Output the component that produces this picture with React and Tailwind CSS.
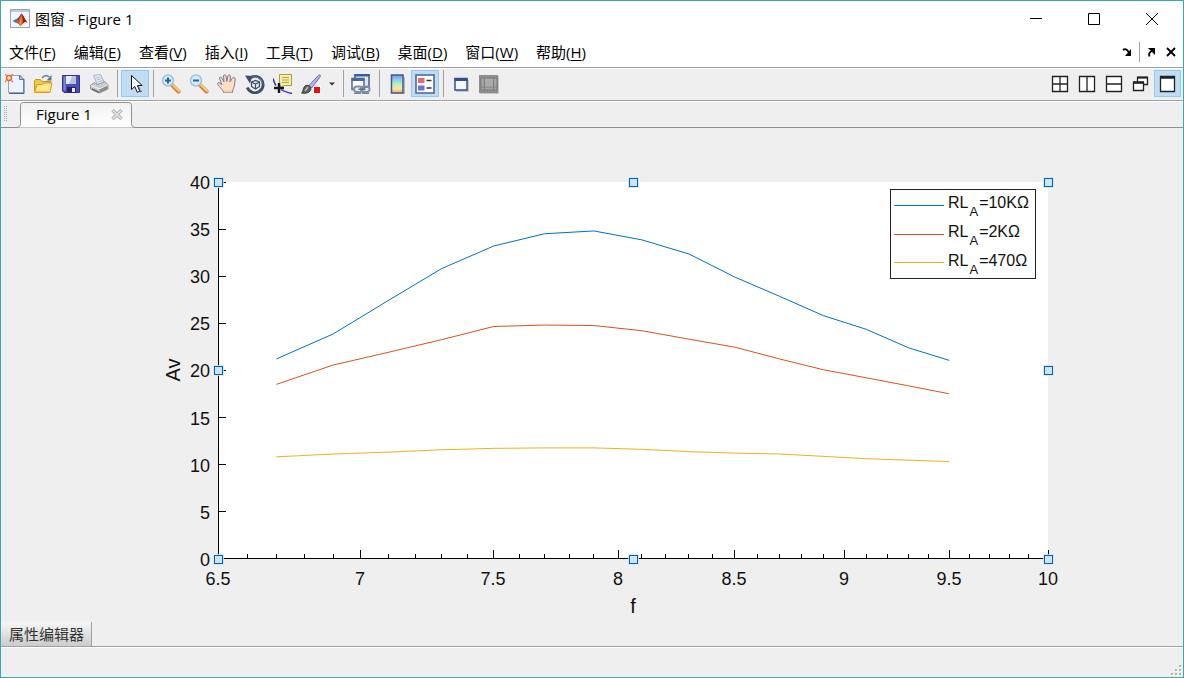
import React from "react";

const menus = [
  ["文件", "F"],
  ["编辑", "E"],
  ["查看", "V"],
  ["插入", "I"],
  ["工具", "T"],
  ["调试", "B"],
  ["桌面", "D"],
  ["窗口", "W"],
  ["帮助", "H"],
];

const Svg = ({ size = 20, children }) => (
  <svg width={size} height={size} viewBox={`0 0 ${size} ${size}`} fill="none" aria-hidden="true">
    {children}
  </svg>
);

const MatlabLogo = () => (
  <Svg>
    <rect x="0.5" y="0.5" width="19" height="18" fill="#f4f6f9" stroke="#98a3b1" />
    <path d="M1 1h18v2H1z" fill="#b9cbe2" />
    <path d="M2.500 12 7 9.500l2 2-3 2.500z" fill="#3f7fc0" />
    <path d="M7 9.500c2-.5 3-4 4.500-5L9 12z" fill="#274a86" />
    <path d="M6 14c2.500-1 4-8 5.500-9.500 2 1.500 3.500 6.500 6 9-2-1-3.500-.5-4.500 1-1 1.300-2 2-3 2.500-.5-2-2-3-4-3z" fill="#d9481c" />
    <path d="M11.500 4.500c2 1.500 3.500 6.500 6 9-2-1-3.500-.5-4.500 1 .5-3-.3-7-1.500-10z" fill="#8f2412" />
    <path d="M9 14c1-2 1.500-5 2.300-7 .6 3 .6 6-.5 9z" fill="#f79a35" />
  </Svg>
);

const NewIcon = () => (
  <Svg>
    <path d="M3.500 1.500h11l4 4v13h-15z" fill="#eef4fd" stroke="#8ea4c8" />
    <path d="M14.500 1v4.500H19z" fill="#b5c9e8" stroke="#5b76a3" />
    <path d="M19 5.500v14H4" stroke="#47618f" />
    <circle cx="4" cy="4" r="2.500" fill="#fff0b0" stroke="#e06a3a" strokeWidth="1.500" />
    <path d="M0 0l1.500 1.500M8 0 6.500 1.500M0 8l1.500-1.500M8 8 6.500 6.500" stroke="#e57d52" strokeWidth="1.500" />
  </Svg>
);

const OpenIcon = () => (
  <Svg>
    <path d="M1.500 17V6.500l1-1h5l1.500 2h9V10" fill="#f1c84a" stroke="#c9951e" />
    <path d="M1.500 18.500 4 10.500h5l1-1.500h9l-2 9.500z" fill="#fde88a" stroke="#cf9b22" />
    <path d="M3 17.500h13.500" stroke="#f6c84a" />
    <path d="M9 4c2-2.500 5-3 7.500-1" stroke="#6d87a8" strokeWidth="1.500" />
    <path d="M18.500 1v5.500h-5z" fill="#5b7699" />
  </Svg>
);

const SaveIcon = () => (
  <Svg>
    <path d="M1.500 1.500h17v17H3l-1.500-1.500z" fill="#4a4dc0" stroke="#33338f" />
    <path d="M2.500 2.500h2v14h-2z" fill="#8286dd" />
    <path d="M5 2h10v8H5z" fill="#e9edfa" />
    <path d="M11 2h4v8H8z" fill="#b4c0e8" />
    <path d="M6 13h9v5.500H6z" fill="#24245a" />
    <path d="M11 14h3v4h-3z" fill="#e8e8f4" />
  </Svg>
);

const PrintIcon = () => (
  <Svg>
    <path d="m4.500 1.500 7-1 4 8-7 2.500z" fill="#e8f1fb" stroke="#9db2cc" />
    <path d="m6.500 4 5-1M7.500 6l5-1.200M8.500 8l5-1.500" stroke="#a9bdd6" />
    <path d="m1.500 11 4-2.500 2.500 2 8-3 3 3.500v4l-8.500 4-9-4z" fill="#cbcbcd" stroke="#98989d" />
    <path d="m2 11.500 9 3.500 7.500-4" stroke="#f5f5f5" />
    <path d="M10.500 15.500V19l8-4v-3.500z" fill="#8b8b90" />
    <path d="m3 15 7 3.500" stroke="#66666c" strokeWidth="1.500" />
  </Svg>
);

const PointerIcon = () => (
  <Svg>
    <path d="M6.500 1.500v14l3.300-3 2.400 5.800 2.600-1.100-2.400-5.700h4.800z" fill="#fff" stroke="#111" />
    <path d="m13.500 12.500 2 5M15 18l2-1" stroke="#555" />
  </Svg>
);

const ZoomIcon = ({ plus }) => (
  <Svg>
    <path d="m11.500 11.500 6 6" stroke="#c98a35" strokeWidth="4" strokeLinecap="round" />
    <path d="m12 11 6 6" stroke="#fbc980" strokeWidth="2" strokeLinecap="round" />
    <circle cx="7" cy="6.500" r="5.500" fill="#d3edf9" stroke="#a3c1da" strokeWidth="1.500" />
    <path d={plus ? "M4 6.500h6M7 3.500v6" : "M4 6.500h6"} stroke="#2c609c" strokeWidth="2" />
  </Svg>
);

const HandIcon = () => (
  <Svg>
    <path
      d="M6.500 18.500c0-2.500-4-5-5.800-8.500-.5-1.300 1-2 2-1l2.300 2L2.500 4.300c-.3-1.500 1.500-2 2.200-.7L7 8 6.500 2c0-1.600 2.200-1.700 2.500-.1l.8 5.600L11 1.800c.4-1.500 2.500-1.200 2.400.4L13 8l2.300-4c.8-1.300 3-.6 2.900 1L17.500 11c-.3 3-2 4-2 7.500z"
      fill="#fcdfc6"
      stroke="#7d7d92"
    />
    <path d="M7 17.500h8" stroke="#f2c6a2" strokeWidth="2" />
  </Svg>
);

const RotateIcon = () => (
  <Svg>
    <path d="M3.500 5.500a8.200 8.200 0 1 1-1.200 8" stroke="#3f4e6c" strokeWidth="2.800" />
    <path d="M3.500 5.500a8.200 8.200 0 0 1 14 3" stroke="#7083a8" strokeWidth="1" />
    <path d="M0 1.500 7.500 2 5 9.500z" fill="#3f4e6c" />
    <path d="m6.500 8 4-1.500 4 1.500v4.500L10.500 15l-4-2.500z" fill="#e6edf8" stroke="#3f4e6c" strokeWidth="1.300" />
    <path d="m6.500 8 4 2 4-2M10.500 10v5" stroke="#3f4e6c" strokeWidth="1.200" />
  </Svg>
);

const CursorIcon = () => (
  <Svg>
    <path d="M0 4.500c.8 3 1.500 5 3 7M8 15.500c3 2 7 3 11 4" stroke="#2e2eea" strokeWidth="1.500" />
    <path d="M6.500.5h12v11h-8l-3 2.500V11.500h-1z" fill="#f8f09a" stroke="#a39b52" />
    <path d="M9 3.500h7M9 6h7M9 8.500h7" stroke="#aca45a" />
    <path d="M1 14h10M6 9v10" stroke="#181818" strokeWidth="2.400" />
  </Svg>
);

const BrushIcon = () => (
  <Svg>
    <path d="m8 11.500 9.500-10.200c1-1 2.500 0 1.800 1.300L10.500 14z" fill="#b3b7ee" stroke="#6468a9" />
    <path d="M.5 19c2-1 1-4 3-6.500 1.500-1.800 4-1.500 5.500 0s1 4-1 5.500c-2 1.300-5 1.500-7.500 1z" fill="#5d625e" stroke="#343a37" />
    <path d="m4 17 3-4" stroke="#b8bcb6" strokeWidth="1.500" />
    <rect x="12.500" y="12.500" width="7" height="7" fill="#f50a0a" stroke="#fff" />
  </Svg>
);

const LinkIcon = () => (
  <Svg>
    <rect x="4" y="0.500" width="14" height="12.500" fill="#dfe8f6" stroke="#415b8f" strokeWidth="1.500" />
    <path d="M3.500 0h15v2.500h-15z" fill="#3d5d9c" />
    <rect x="1" y="4.500" width="12" height="11" fill="#fff" stroke="#506b9c" strokeWidth="1.500" />
    <path d="M.5 4h13v3H.5z" fill="#49689f" />
    <rect x="3" y="12.500" width="8.500" height="5.500" rx="2.700" fill="#e6edf4" stroke="#7d92a9" strokeWidth="2" />
    <rect x="10" y="12.500" width="8.500" height="5.500" rx="2.700" stroke="#7d92a9" strokeWidth="2" />
    <path d="M7.500 15.200h7" stroke="#566e88" strokeWidth="1.500" />
    <path d="M3 19.300h7M11 19.300h7" stroke="#566e88" />
  </Svg>
);

const ColorbarIcon = () => (
  <Svg>
    <defs>
      <linearGradient id="bar" x1="0" y1="0" x2="0" y2="1">
        <stop offset="0" stopColor="#8f8df0" />
        <stop offset="0.3" stopColor="#86d9f3" />
        <stop offset="0.55" stopColor="#c5f2b0" />
        <stop offset="0.75" stopColor="#fbe79a" />
        <stop offset="1" stopColor="#f6a08c" />
      </linearGradient>
    </defs>
    <path d="M17.500 3v17H6" stroke="#b5b5b5" />
    <rect x="4.500" y="1" width="11.500" height="18" fill="url(#bar)" stroke="#3f5a87" strokeWidth="1.500" />
  </Svg>
);

const LegendIcon = () => (
  <Svg>
    <rect x="1" y="1" width="18" height="18" fill="#fff" stroke="#48628f" strokeWidth="1.500" />
    <path d="M3 4h6.500v5H3z" fill="#e86a6a" />
    <path d="M3 11.500h6.500v5H3z" fill="#6f6fe4" />
    <path d="M11.500 6.500h5M11.500 14h5" stroke="#333" strokeWidth="1.500" />
  </Svg>
);

const HidePlotToolsIcon = () => (
  <Svg>
    <path d="M17 6v11H5" stroke="#b9b9b9" strokeWidth="1.500" />
    <rect x="4" y="4.500" width="12" height="11.500" fill="#f4f8ff" stroke="#34508c" strokeWidth="1.500" />
    <path d="M3.500 4h13v3h-13z" fill="#34508c" />
  </Svg>
);

const ShowPlotToolsIcon = () => (
  <Svg>
    <path d="M0 1h19v18H0z" fill="#8e8e8e" />
    <path d="M2 4h16v12H2z" fill="#a4a4a4" stroke="#7a7a7a" />
    <path d="M5.500 4v12M14.500 4v12M5.500 13h9M2 13h3.500M14.500 13H18" stroke="#7c7c7c" />
    <path d="M6 5h8v7.500H6z" fill="#aaa" />
    <path d="M19.500 2v17.500H1" stroke="#c4c4c4" />
  </Svg>
);

const ToolButton = ({ label, pressed, children }) => (
  <button
    type="button"
    aria-label={label}
    aria-pressed={pressed}
    className={
      "flex h-[27px] w-7 items-center justify-center " +
      (pressed ? "border border-[#91c9f7] bg-[#c0dcf3]" : "")
    }
  >
    {children}
  </button>
);

const Divider = () => (
  <div className="flex h-[27px] w-2 justify-center">
    <div className="w-px bg-[#a0a0a0]" />
  </div>
);

const layouts = [
  ["平铺", <path key="p" d="M2.500 2.500h15v15h-15zM10 2v16M2 10h16" />],
  ["左右平铺", <path key="p" d="M2.500 2.500h15v15h-15zM10 2v16" />],
  ["上下平铺", <path key="p" d="M2.500 2.500h15v15h-15zM2 10h16" />],
  [
    "浮动",
    <g key="p">
      <path d="M6.500 3.500h10v7h-10z" />
      <path d="M6 3.500h11" strokeWidth="2" />
      <path d="M2.500 8.500h10v8h-10z" />
      <path d="M2 8.500h11" strokeWidth="2.500" />
    </g>,
  ],
  [
    "最大化",
    <g key="p">
      <path d="M2.500 2.500h14v15h-14z" />
      <path d="M2 3.500h15" strokeWidth="2.500" />
    </g>,
  ],
];

// Plot geometry: x is logarithmic between 6.5 and 10, y is linear from 0 to 40.
const LEFT = 218;
const RIGHT = 1048;
const TOP = 182;
const BOTTOM = 558.5;
const xPos = (v) => LEFT + ((RIGHT - LEFT) * Math.log(v / 6.5)) / Math.log(10 / 6.5);
const yPos = (v) => BOTTOM - ((BOTTOM - TOP) * v) / 40;

const frequency = [6.7, 6.9, 7.1, 7.3, 7.5, 7.7, 7.9, 8.1, 8.3, 8.5, 8.7, 8.9, 9.1, 9.3, 9.5];
const series = [
  {
    value: "10KΩ",
    color: "#0072bd",
    data: [21.2, 23.85, 27.4, 30.8, 33.2, 34.5, 34.8, 33.85, 32.35, 29.9, 27.85, 25.8, 24.35, 22.4, 21.05],
  },
  {
    value: "2KΩ",
    color: "#d95319",
    data: [18.5, 20.55, 21.9, 23.25, 24.65, 24.8, 24.75, 24.2, 23.3, 22.45, 21.2, 20.05, 19.2, 18.35, 17.5],
  },
  {
    value: "470Ω",
    color: "#edb120",
    data: [10.8, 11.1, 11.3, 11.55, 11.7, 11.75, 11.75, 11.6, 11.35, 11.2, 11.1, 10.85, 10.6, 10.45, 10.3],
  },
];

const xMinor = Array.from({ length: 36 }, (_, i) => (65 + i) / 10);
const xMajor = [6.5, 7, 7.5, 8, 8.5, 9, 9.5, 10];
const yMajor = [0, 5, 10, 15, 20, 25, 30, 35, 40];

const handles = [
  [218, 182],
  [633, 182],
  [1048, 182],
  [218, 370],
  [1048, 370],
  [218, 559],
  [633, 559],
  [1048, 559],
];

const Chart = () => (
  <svg
    viewBox="1 128 1182 494"
    className="h-full w-full font-['Liberation_Sans',Arial,sans-serif]"
    role="img"
    aria-label="Av / f"
  >
    <rect x={LEFT} y={TOP} width={RIGHT - LEFT} height="377" fill="#fff" />
    <g stroke="#000" shapeRendering="crispEdges">
      <path d="M218.500 182V559M218 558.500H1048" />
      {yMajor.map((v) => (
        <path key={v} d={`M218 ${Math.floor(yPos(v) + 0.2) + 0.5}h8`} />
      ))}
      {xMinor.map((v) => (
        <path key={v} d={`M${Math.round(xPos(v) - 0.5) + 0.5} 558v${xMajor.includes(v) ? -8 : -4}`} />
      ))}
    </g>
    <g className="text-[18px]" fill="#111">
      {yMajor.map((v) => (
        <text key={v} x="210" y={Math.round(yPos(v) + 0.2) + 7} textAnchor="end">
          {v}
        </text>
      ))}
      {xMajor.map((v) => (
        <text key={v} x={Math.round(xPos(v) - 0.5)} y="585" textAnchor="middle">
          {v}
        </text>
      ))}
    </g>
    <g className="text-xl" fill="#111">
      <text x="633" y="613" textAnchor="middle">
        f
      </text>
      <text transform="translate(180 370) rotate(-90)" textAnchor="middle">
        Av
      </text>
    </g>
    {series.map((s) => (
      <polyline
        key={s.value}
        fill="none"
        stroke={s.color}
        points={s.data.map((v, i) => `${xPos(frequency[i])},${yPos(v)}`).join(" ")}
      />
    ))}
    <rect x="890.500" y="189.500" width="145" height="89" fill="#fff" stroke="#222" />
    {series.map((s, i) => (
      <g key={s.value}>
        <path d={`M894 ${205.5 + i * 29 - (i === 2 ? 1 : 0)}h50`} stroke={s.color} />
        <text x="948" y={208 + i * 29} fill="#111" className="text-base">
          RL
          <tspan dx="1" dy="8" className="text-[13px]">
            A
          </tspan>
          <tspan dx="1" dy="-8">={s.value}</tspan>
        </text>
      </g>
    ))}
    {handles.map(([x, y]) => (
      <g key={`${x}-${y}`}>
        <rect x={x - 5} y={y - 5} width="11" height="11" fill="#cfe6f5" fillOpacity="0.8" />
        <rect x={x - 3.5} y={y - 3.5} width="8" height="8" fill="#c9e5f8" stroke="#0560a6" />
      </g>
    ))}
  </svg>
);

export default function App() {
  return (
    <div className="flex h-screen flex-col border border-[#3aa8a8] bg-[#efefef] font-['Open_Sans','Noto_Sans_CJK_SC',sans-serif] text-[15px] leading-5 text-black">
      <header className="flex h-[37px] items-center bg-white pb-0.5 pl-[9px] pr-0.5">
        <MatlabLogo />
        <h1 className="ml-[5px]">图窗 - Figure 1</h1>
        <div className="ml-auto flex self-stretch">
          {[
            ["最小化", "M1 6.500h12"],
            ["最大化", "M1.500 1.500h11v11h-11z"],
            ["关闭", "m1 1 12 12M13 1 1 13"],
          ].map(([label, d]) => (
            <button key={label} type="button" aria-label={label} className="flex w-[58px] items-center justify-center">
              <Svg size={14}>
                <path d={d} stroke="#000" />
              </Svg>
            </button>
          ))}
        </div>
      </header>

      <nav className="flex h-[29px] items-center bg-white pb-0.5 pl-2 pr-0.5">
        <div className="flex gap-[18px]">
          {menus.map(([name, key]) => (
            <button key={key} type="button" className="whitespace-nowrap">
              {name}(<u className="underline-offset-2">{key}</u>)
            </button>
          ))}
        </div>
        <div className="ml-auto flex items-center">
          <button type="button" aria-label="停靠" className="flex w-5 justify-center">
            <Svg size={12}>
              <path d="M2 4c2-1.500 4-1 5.500 2" stroke="#000" strokeWidth="1.800" />
              <path d="M10 3v7H4z" fill="#000" />
            </Svg>
          </button>
          <div className="ml-0.5 h-5 w-px bg-[#a0a0a0]" />
          <button type="button" aria-label="取消停靠" className="flex w-[21px] justify-center">
            <Svg size={12}>
              <path d="M4.500 10.500c-1-2.500 0-4.500 2.500-5.500" stroke="#000" strokeWidth="1.800" />
              <path d="M3 2h7v7z" fill="#000" />
            </Svg>
          </button>
          <button type="button" aria-label="关闭图窗" className="flex w-5 justify-center">
            <Svg size={12}>
              <path d="m2 2 8 8M10 2l-8 8" stroke="#000" strokeWidth="1.800" />
            </Svg>
          </button>
        </div>
      </nav>

      <div className="flex h-[34px] items-center border-y border-[#a0a0a0] pb-px pr-0.5 shadow-[inset_0_1px_0_#fff]">
        <ToolButton label="新建"><NewIcon /></ToolButton>
        <ToolButton label="打开"><OpenIcon /></ToolButton>
        <ToolButton label="保存"><SaveIcon /></ToolButton>
        <ToolButton label="打印"><PrintIcon /></ToolButton>
        <Divider />
        <ToolButton label="编辑绘图" pressed><PointerIcon /></ToolButton>
        <Divider />
        <ToolButton label="放大"><ZoomIcon plus /></ToolButton>
        <ToolButton label="缩小"><ZoomIcon /></ToolButton>
        <ToolButton label="平移"><HandIcon /></ToolButton>
        <ToolButton label="三维旋转"><RotateIcon /></ToolButton>
        <ToolButton label="数据游标"><CursorIcon /></ToolButton>
        <ToolButton label="刷亮"><BrushIcon /></ToolButton>
        <button type="button" aria-label="刷亮选项" className="flex h-[27px] w-3.5 items-center justify-center">
          <Svg size={6}>
            <path d="M0 1.500h6L3 4.500z" fill="#333" />
          </Svg>
        </button>
        <Divider />
        <ToolButton label="链接绘图"><LinkIcon /></ToolButton>
        <Divider />
        <ToolButton label="插入颜色栏"><ColorbarIcon /></ToolButton>
        <ToolButton label="插入图例" pressed><LegendIcon /></ToolButton>
        <Divider />
        <ToolButton label="隐藏绘图工具"><HidePlotToolsIcon /></ToolButton>
        <ToolButton label="显示绘图工具"><ShowPlotToolsIcon /></ToolButton>
        <div className="ml-auto flex">
          {layouts.map(([label, shape], i) => (
            <button
              key={label}
              type="button"
              aria-label={label}
              className={
                "flex h-[27px] w-[27px] items-center justify-center " +
                (i === 4 ? "border border-[#91c9f7] bg-[#c0dcf3]" : "")
              }
            >
              <Svg>
                <g stroke="#222" fill="#fff" strokeWidth="1.300">
                  {shape}
                </g>
              </Svg>
            </button>
          ))}
        </div>
      </div>

      <div className="flex h-[27px] items-stretch border-b border-[#8f8f8f] pl-[3px] shadow-[inset_0_1px_0_#fff]">
        <svg width="4" height="16" viewBox="0 0 4 16" className="self-center" aria-hidden="true">
          <path d="M.5 0v16M2.500 0v16" stroke="#a8a8a8" strokeDasharray="1 1" />
        </svg>
        <div className="relative ml-2 flex w-[120px] items-center pl-5">
          <svg width="120" height="27" viewBox="0 0 120 27" className="absolute left-0 top-0" aria-hidden="true">
            <defs>
              <linearGradient id="tab" x1="0" y1="0" x2="0" y2="1">
                <stop offset="0" stopColor="#f1f1f1" />
                <stop offset="1" stopColor="#ffffff" />
              </linearGradient>
            </defs>
            <path d="M0 26.500c3 0 4.500-1 4.500-4V5c0-2.500 1-3.500 3.500-3.500h104c2.500 0 3.500 1 3.500 3.500v17.500c0 3 1.500 4 4.500 4" fill="url(#tab)" stroke="#8f8f8f" />
          </svg>
          <button type="button" className="relative whitespace-nowrap">Figure 1</button>
          <button type="button" aria-label="关闭选项卡" className="relative ml-auto mr-3">
            <Svg size={14}>
              <path d="m2.500 3 9 9M11.500 3l-9 9" stroke="#b4b4b4" strokeWidth="3.500" />
              <path d="m3 3.500 8 8M11 3.500l-8 8" stroke="#e8e8e8" strokeWidth="1.300" />
            </Svg>
          </button>
        </div>
      </div>

      <main className="min-h-0 flex-1">
        <Chart />
      </main>

      <div className="flex h-6">
        <button
          type="button"
          className="border-r border-[#a0a0a0] bg-linear-to-b from-[#f6f6f6] to-[#cccccc] pl-2 pr-[7px] text-[#333]"
        >
          属性编辑器
        </button>
      </div>

      <footer className="flex h-[31px] items-end justify-end border-t border-[#a0a0a0] shadow-[inset_0_1px_0_#fff]">
        <svg width="14" height="14" viewBox="0 0 14 14" aria-hidden="true">
          <path d="M11 3h2v2h-2zM7 7h2v2H7zM11 7h2v2h-2zM3 11h2v2H3zM7 11h2v2H7zM11 11h2v2h-2z" fill="#fff" />
          <path d="M10 2h2v2h-2zM6 6h2v2H6zM10 6h2v2h-2zM2 10h2v2H2zM6 10h2v2H6zM10 10h2v2h-2z" fill="#b5b5a0" />
        </svg>
      </footer>
    </div>
  );
}
